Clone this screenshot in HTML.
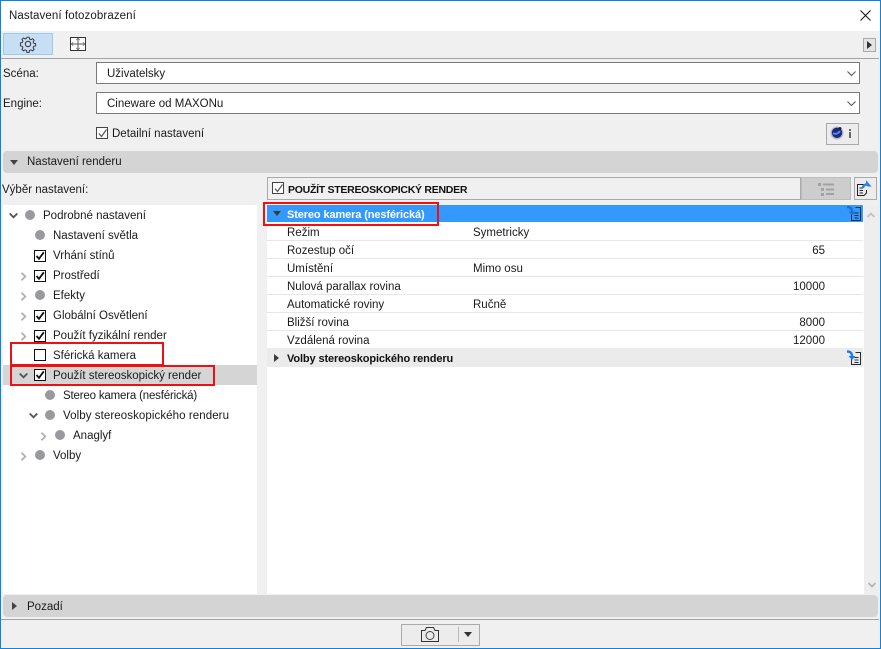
<!DOCTYPE html>
<html><head><meta charset="utf-8"><style>
html,body{margin:0;padding:0}
body{width:881px;height:649px;overflow:hidden;position:relative;background:#f0f0f0;font-family:"Liberation Sans",sans-serif;font-size:11.5px;color:#1a1a1a;letter-spacing:0}
.a{position:absolute}
.t{position:absolute;white-space:nowrap;line-height:14px}
.b{font-weight:bold;font-size:11px;letter-spacing:-.12px}
.cb{position:absolute;width:10px;height:10px;border:1px solid #111;background:#fff}
.cb svg{position:absolute;left:0;top:0}
.dot{position:absolute;width:10px;height:10px;border-radius:50%;background:#999a9d}
.sep{position:absolute;left:267px;width:596px;height:1px;background:#e6e6e6}
.red{position:absolute;border:2px solid #f01010;box-sizing:border-box}
svg{position:absolute;overflow:visible}
.ch{stroke:#b0b0b0;stroke-width:1.8;fill:none}
.cd{stroke:#555;stroke-width:1.8;fill:none}
</style></head><body>
<!-- window -->
<div class="a" style="left:0;top:0;width:881px;height:31px;background:#fff"></div>
<div class="t" style="left:9px;top:9px;letter-spacing:.1px">Nastavení fotozobrazení</div>
<svg style="left:860px;top:10px" width="11" height="11"><path d="M.5 .5L10.500 10.500M10.500 .5L.5 10.500" stroke="#111" fill="none"/></svg>
<!-- toolbar -->
<div class="a" style="left:3px;top:33px;width:48px;height:20px;background:#c6dff5;border:1px solid #99ccf5"></div>
<svg style="left:20px;top:36px" width="16" height="16" viewBox="0 0 16 16"><path d="M6.800 .7h2.400l.4 2 1.500.7 1.800-1.100 1.600 1.600-1.100 1.800.7 1.500 2 .4v2.400l-2 .4-.7 1.500 1.100 1.800-1.600 1.600-1.800-1.100-1.500.7-.4 2H6.800l-.4-2-1.500-.7-1.800 1.100-1.600-1.600 1.100-1.800-.7-1.500-2-.4V6.800l2-.4.7-1.500-1.100-1.800 1.600-1.600 1.800 1.100 1.500-.7z" fill="none" stroke="#333" transform="translate(.5 .5) scale(.94)"/><circle cx="8" cy="8" r="2.700" fill="none" stroke="#333"/></svg>
<svg style="left:70px;top:37px" width="16" height="14"><rect x=".5" y=".5" width="15" height="13" fill="#fff" stroke="#333"/><path d="M8 3v8M3 7h10" stroke="#555"/><path d="M6.500 3L8 1.500 9.500 3M6.500 11L8 12.500 9.500 11M3 5.500L1.500 7 3 8.500M13 5.500L14.500 7 13 8.500" stroke="#555" fill="none"/></svg>
<div class="a" style="left:863px;top:38px;width:11px;height:12px;background:#e4e4e4;border:1px solid #aaa"></div>
<svg style="left:867px;top:41px" width="5" height="8"><path d="M0 0L5 4 0 8z" fill="#333"/></svg>
<div class="a" style="left:1px;top:58px;width:878px;height:1px;background:#a3a3a3"></div>
<!-- selects -->
<div class="t" style="left:3px;top:67px">Scéna:</div>
<div class="a" style="left:96px;top:62px;width:762px;height:20px;background:#fff;border:1px solid #7a7a7a"></div>
<div class="t" style="left:107px;top:67px">Uživatelsky</div>
<svg style="left:847px;top:71px" width="9" height="5"><path d="M.5 .5L4.500 4.500 8.500 .5" stroke="#555" fill="none"/></svg>
<div class="t" style="left:3px;top:97px">Engine:</div>
<div class="a" style="left:96px;top:92px;width:762px;height:20px;background:#fff;border:1px solid #7a7a7a"></div>
<div class="t" style="left:107px;top:97px">Cineware od MAXONu</div>
<svg style="left:847px;top:101px" width="9" height="5"><path d="M.5 .5L4.500 4.500 8.500 .5" stroke="#555" fill="none"/></svg>
<!-- detail -->
<div class="cb" style="left:96px;top:127px;border-color:#444"><svg width="11" height="11"><path d="M2 5.500L4.500 8.500 9.500 1.500" stroke="#555" stroke-width="1.200" fill="none"/></svg></div>
<div class="t" style="left:112px;top:127px">Detailní nastavení</div>
<div class="a" style="left:826px;top:123px;width:31px;height:20px;background:#ececec;border:1px solid #aaa"></div>
<svg style="left:830px;top:126px" width="14" height="14"><circle cx="7" cy="7" r="6.500" fill="#b8bcc8"/><circle cx="7" cy="6.800" r="5.200" fill="#1b2a80"/><path d="M3 7c2 1.500 5 1 7-2" stroke="#5a8ae6" stroke-width="2" fill="none"/><circle cx="10" cy="2.500" r="1.500" fill="#223"/></svg>
<div class="a" style="left:849px;top:129px;width:2px;height:2px;background:#666"></div>
<div class="a" style="left:849px;top:132px;width:2px;height:6px;background:#666"></div>
<!-- section header -->
<div class="a" style="left:3px;top:151px;width:875px;height:22px;background:#d4d4d4;border-radius:4px"></div>
<svg style="left:10px;top:160px" width="8" height="5"><path d="M0 0H8L4 5z" fill="#444"/></svg>
<div class="t" style="left:27px;top:155px">Nastavení renderu</div>
<div class="t" style="left:2px;top:183px">Výběr nastavení:</div>
<!-- tree -->
<div class="a" style="left:3px;top:205px;width:254px;height:389px;background:#fff"></div>
<div class="a" style="left:3px;top:365px;width:254px;height:20px;background:#d5d5d5"></div>

<svg style="left:9px;top:213px" width="9" height="5"><path class="cd" d="M.7 .5L4.500 4.300 8.300 .5"/></svg>
<div class="dot" style="left:25px;top:210px"></div>
<div class="t" style="left:43px;top:209px">Podrobné nastavení</div>
<div class="dot" style="left:35px;top:230px"></div>
<div class="t" style="left:53px;top:229px">Nastavení světla</div>
<div class="cb" style="left:34px;top:250px"><svg width="10" height="10"><path d="M1.500 5L4 7.800 8.800 1.300" stroke="#111" stroke-width="1.800" fill="none"/></svg></div>
<div class="t" style="left:53px;top:249px">Vrhání stínů</div>
<svg style="left:21px;top:272px" width="5" height="9"><path class="ch" d="M.5 .7L4.300 4.500 .5 8.300"/></svg>
<div class="cb" style="left:34px;top:270px"><svg width="10" height="10"><path d="M1.500 5L4 7.800 8.800 1.300" stroke="#111" stroke-width="1.800" fill="none"/></svg></div>
<div class="t" style="left:53px;top:269px">Prostředí</div>
<svg style="left:21px;top:292px" width="5" height="9"><path class="ch" d="M.5 .7L4.300 4.500 .5 8.300"/></svg>
<div class="dot" style="left:35px;top:290px"></div>
<div class="t" style="left:53px;top:289px">Efekty</div>
<svg style="left:21px;top:312px" width="5" height="9"><path class="ch" d="M.5 .7L4.300 4.500 .5 8.300"/></svg>
<div class="cb" style="left:34px;top:310px"><svg width="10" height="10"><path d="M1.500 5L4 7.800 8.800 1.300" stroke="#111" stroke-width="1.800" fill="none"/></svg></div>
<div class="t" style="left:53px;top:309px">Globální Osvětlení</div>
<svg style="left:21px;top:332px" width="5" height="9"><path class="ch" d="M.5 .7L4.300 4.500 .5 8.300"/></svg>
<div class="cb" style="left:34px;top:330px"><svg width="10" height="10"><path d="M1.500 5L4 7.800 8.800 1.300" stroke="#111" stroke-width="1.800" fill="none"/></svg></div>
<div class="t" style="left:53px;top:329px">Použít fyzikální render</div>
<div class="cb" style="left:34px;top:349px"></div>
<div class="t" style="left:53px;top:349px">Sférická kamera</div>
<svg style="left:19px;top:373px" width="9" height="5"><path class="cd" d="M.7 .5L4.500 4.300 8.300 .5"/></svg>
<div class="cb" style="left:34px;top:369px"><svg width="10" height="10"><path d="M1.500 5L4 7.800 8.800 1.300" stroke="#111" stroke-width="1.800" fill="none"/></svg></div>
<div class="t" style="left:53px;top:369px">Použít stereoskopický render</div>
<div class="dot" style="left:45px;top:390px"></div>
<div class="t" style="left:63px;top:389px;letter-spacing:-.18px">Stereo kamera (nesférická)</div>
<svg style="left:29px;top:413px" width="9" height="5"><path class="cd" d="M.7 .5L4.500 4.300 8.300 .5"/></svg>
<div class="dot" style="left:45px;top:410px"></div>
<div class="t" style="left:63px;top:409px;letter-spacing:.08px">Volby stereoskopického renderu</div>
<svg style="left:41px;top:432px" width="5" height="9"><path class="ch" d="M.5 .7L4.300 4.500 .5 8.300"/></svg>
<div class="dot" style="left:55px;top:430px"></div>
<div class="t" style="left:73px;top:429px">Anaglyf</div>
<svg style="left:21px;top:452px" width="5" height="9"><path class="ch" d="M.5 .7L4.300 4.500 .5 8.300"/></svg>
<div class="dot" style="left:35px;top:450px"></div>
<div class="t" style="left:53px;top:449px">Volby</div>
<!-- red boxes -->
<div class="red" style="left:10px;top:342px;width:154px;height:24px"></div>
<div class="red" style="left:10px;top:365px;width:205px;height:21px"></div>

<!-- right header -->
<div class="a" style="left:267px;top:177px;width:532px;height:21px;background:#f0f0f0;border:1px solid #aaa"></div>
<div class="cb" style="left:272px;top:182px;border-color:#444"><svg width="11" height="11"><path d="M2 5.500L4.500 8.500 9.500 1.500" stroke="#555" stroke-width="1.200" fill="none"/></svg></div>
<div class="t b" style="left:288px;top:183px;color:#111;font-size:10.5px;letter-spacing:-.27px">POUŽÍT STEREOSKOPICKÝ RENDER</div>
<div class="a" style="left:801px;top:177px;width:48px;height:21px;background:#cdcdcd;border:1px solid #bdbdbd"></div>
<svg style="left:818px;top:183px" width="16" height="13"><path d="M5 1.500H16M8 6.500H16M8 11H16" stroke="#a2a2a2" stroke-width="2"/><path d="M0 0H3V3H0zM3 5H6V8H3zM3 10H6V13H3z" fill="#a2a2a2"/></svg>
<div class="a" style="left:854px;top:177px;width:21px;height:21px;background:#ececec;border:1px solid #aaa"></div>
<svg style="left:857px;top:180px" width="18" height="16"><path d="M7 4.500H.5V15.500H7L9.500 13V10" fill="none" stroke="#222"/><path d="M2.500 8H6M2.500 10.500H6M2.500 13H6" stroke="#222"/><path d="M6 8C6 5.500 8 4.500 10 4.500" stroke="#2a80f0" stroke-width="2.400" fill="none"/><path d="M12 0V8.500L9 5.500V3z" fill="#2a80f0" transform="rotate(-40 11 4)"/></svg>
<!-- right panel -->
<div class="a" style="left:267px;top:205px;width:597px;height:389px;background:#fff"></div>
<div class="a" style="left:267px;top:205px;width:596px;height:17px;background:#3399ff"></div>
<svg style="left:273px;top:211px" width="8" height="5"><path d="M0 0H8L4 5z" fill="#3a3a3a"/></svg>
<div class="t b" style="left:287px;top:208px;color:#fff">Stereo kamera (nesférická)</div>
<svg style="left:846px;top:205px" width="17" height="17"><path d="M9.500 2.500H14.500V15.500H5.500V9" fill="none" stroke="#1c2c3e"/><path d="M8.500 8H12.500M8.500 10.500H12.500M8.500 13H12.500" stroke="#1c2c3e"/><path d="M1 2C4 2 6 3 6 7" stroke="#1f6fd0" stroke-width="2.400" fill="none"/><path d="M2.500 6.500H9.500L6 10.500z" fill="#1f6fd0"/></svg>

<div class="sep" style="top:240px"></div><div class="sep" style="top:258px"></div><div class="sep" style="top:276px"></div><div class="sep" style="top:294px"></div><div class="sep" style="top:312px"></div><div class="sep" style="top:330px"></div>
<div class="t" style="left:287px;top:226px">Režim</div><div class="t" style="left:473px;top:226px">Symetricky</div>
<div class="t" style="left:287px;top:244px">Rozestup očí</div><div class="t" style="right:56px;top:244px">65</div>
<div class="t" style="left:287px;top:262px">Umístění</div><div class="t" style="left:473px;top:262px">Mimo osu</div>
<div class="t" style="left:287px;top:280px">Nulová parallax rovina</div><div class="t" style="right:56px;top:280px">10000</div>
<div class="t" style="left:287px;top:298px">Automatické roviny</div><div class="t" style="left:473px;top:298px">Ručně</div>
<div class="t" style="left:287px;top:316px">Bližší rovina</div><div class="t" style="right:56px;top:316px">8000</div>
<div class="t" style="left:287px;top:334px">Vzdálená rovina</div><div class="t" style="right:56px;top:334px">12000</div>
<div class="a" style="left:267px;top:348px;width:596px;height:19px;background:#ebebeb"></div>
<svg style="left:274px;top:354px" width="5" height="8"><path d="M0 0L5 4 0 8z" fill="#3a3a3a"/></svg>
<div class="t b" style="left:287px;top:352px;color:#111">Volby stereoskopického renderu</div>
<svg style="left:846px;top:350px" width="17" height="17"><path d="M9.500 2.500H14.500V14.500H5.500V9" fill="none" stroke="#1c2c3e"/><path d="M8.500 7.500H12.500M8.500 10H12.500M8.500 12.500H12.500" stroke="#1c2c3e"/><path d="M1 1.500C4 1.500 6 2.500 6 6.500" stroke="#1f78f0" stroke-width="2.400" fill="none"/><path d="M2.500 6H9.500L6 10z" fill="#1f78f0"/></svg>
<div class="red" style="left:263px;top:202px;width:176px;height:24px"></div>
<!-- scrollbar -->
<div class="a" style="left:864px;top:205px;width:15px;height:389px;background:#eeeeee"></div>
<svg style="left:867px;top:212px" width="8" height="6"><path d="M.5 5L4 1.500 7.500 5" stroke="#c2c2c2" stroke-width="1.800" fill="none"/></svg>
<svg style="left:868px;top:582px" width="8" height="6"><path d="M.5 1L4 4.500 7.500 1" stroke="#b5b5b5" stroke-width="1.800" fill="none"/></svg>
<!-- bottom -->
<div class="a" style="left:3px;top:595px;width:875px;height:22px;background:#d4d4d4;border-radius:4px"></div>
<svg style="left:12px;top:602px" width="5" height="8"><path d="M0 0L5 4 0 8z" fill="#444"/></svg>
<div class="t" style="left:27px;top:600px">Pozadí</div>
<div class="a" style="left:1px;top:619px;width:878px;height:1px;background:#a3a3a3"></div>
<div class="a" style="left:401px;top:624px;width:77px;height:20px;background:#ececec;border:1px solid #aaa"></div>
<svg style="left:421px;top:627px" width="18" height="15"><path d="M.5 14.500V3.500H4L5.500 .5H12.500L14 3.500H17.500V14.500z" fill="none" stroke="#333"/><circle cx="9" cy="8.500" r="4" fill="none" stroke="#444"/></svg>
<div class="a" style="left:458px;top:627px;width:1px;height:15px;background:#bbb"></div>
<svg style="left:464px;top:632px" width="8" height="5"><path d="M0 0H8L4 5z" fill="#333"/></svg>
<!-- borders -->
<div class="a" style="left:0;top:0;width:1px;height:649px;background:#0a84e0"></div>
<div class="a" style="left:880px;top:0;width:1px;height:649px;background:#0a84e0"></div>
<div class="a" style="left:0;top:0;width:881px;height:1px;background:#0a84e0"></div>
<div class="a" style="left:0;top:648px;width:881px;height:1px;background:#0a84e0"></div>
</body></html>
